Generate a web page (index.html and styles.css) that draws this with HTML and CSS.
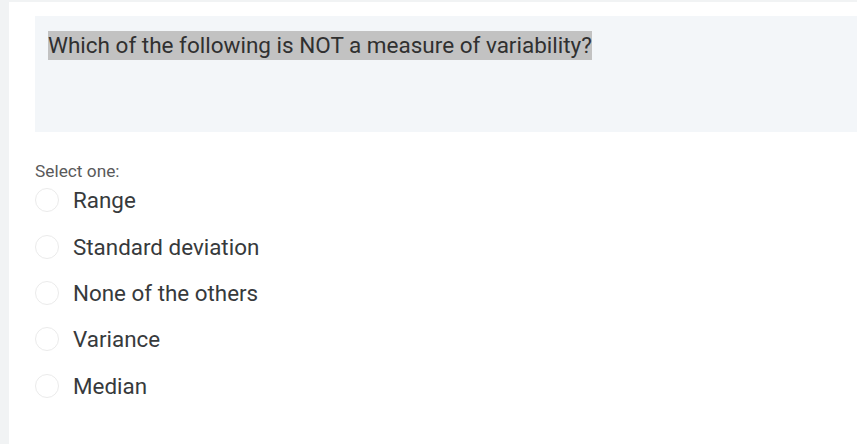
FILE: index.html
```html
<!DOCTYPE html>
<html>
<head>
<meta charset="utf-8">
<link rel="stylesheet" href="styles.css">
</head>
<body>
<div class="page">
  <div class="panel">
    <div class="qtext"><span class="hl">Which of the following is NOT a measure of variability?</span></div>
    <div class="answers">
      <div class="prompt">Select one:</div>
      <label class="opt"><span class="radio"></span><span class="lbl">Range</span></label>
      <label class="opt"><span class="radio"></span><span class="lbl">Standard deviation</span></label>
      <label class="opt"><span class="radio"></span><span class="lbl">None of the others</span></label>
      <label class="opt"><span class="radio"></span><span class="lbl">Variance</span></label>
      <label class="opt"><span class="radio"></span><span class="lbl">Median</span></label>
    </div>
  </div>
</div>
</body>
</html>
```

FILE: styles.css
```css
html, body {
  margin: 0;
  padding: 0;
  background: #f1f3f4;
  font-family: Roboto, "Liberation Sans", sans-serif;
}
.page {
  padding: 2px 0 0 9px;
  height: 442px;
  overflow: hidden;
}
.panel {
  background: #ffffff;
  height: 100%;
  padding: 14px 0 0 26px;
  box-sizing: border-box;
}
.qtext {
  background: #f3f6f9;
  height: 116px;
  padding: 15px 13px 0;
  box-sizing: border-box;
  font-size: 22.5px;
  line-height: 29px;
  color: #303030;
}
.hl {
  background: #c2c2c2;
  display: inline-block;
  height: 29px;
}
.answers {
  padding-top: 30px;
}
.prompt {
  font-size: 17.3px;
  line-height: 19px;
  color: #5a5a5a;
}
.opt {
  display: flex;
  align-items: center;
  height: 46.4px;
  margin-top: -12px;
  margin-bottom: 12px;
}
.opt:first-of-type { margin-top: -4px; }
.radio {
  width: 24px;
  height: 24px;
  border: 1px solid #ebebeb;
  border-radius: 50%;
  box-sizing: border-box;
  margin-right: 14px;
  background: #fff;
}
.lbl {
  font-size: 22.4px;
  color: #373a3c;
}
```
